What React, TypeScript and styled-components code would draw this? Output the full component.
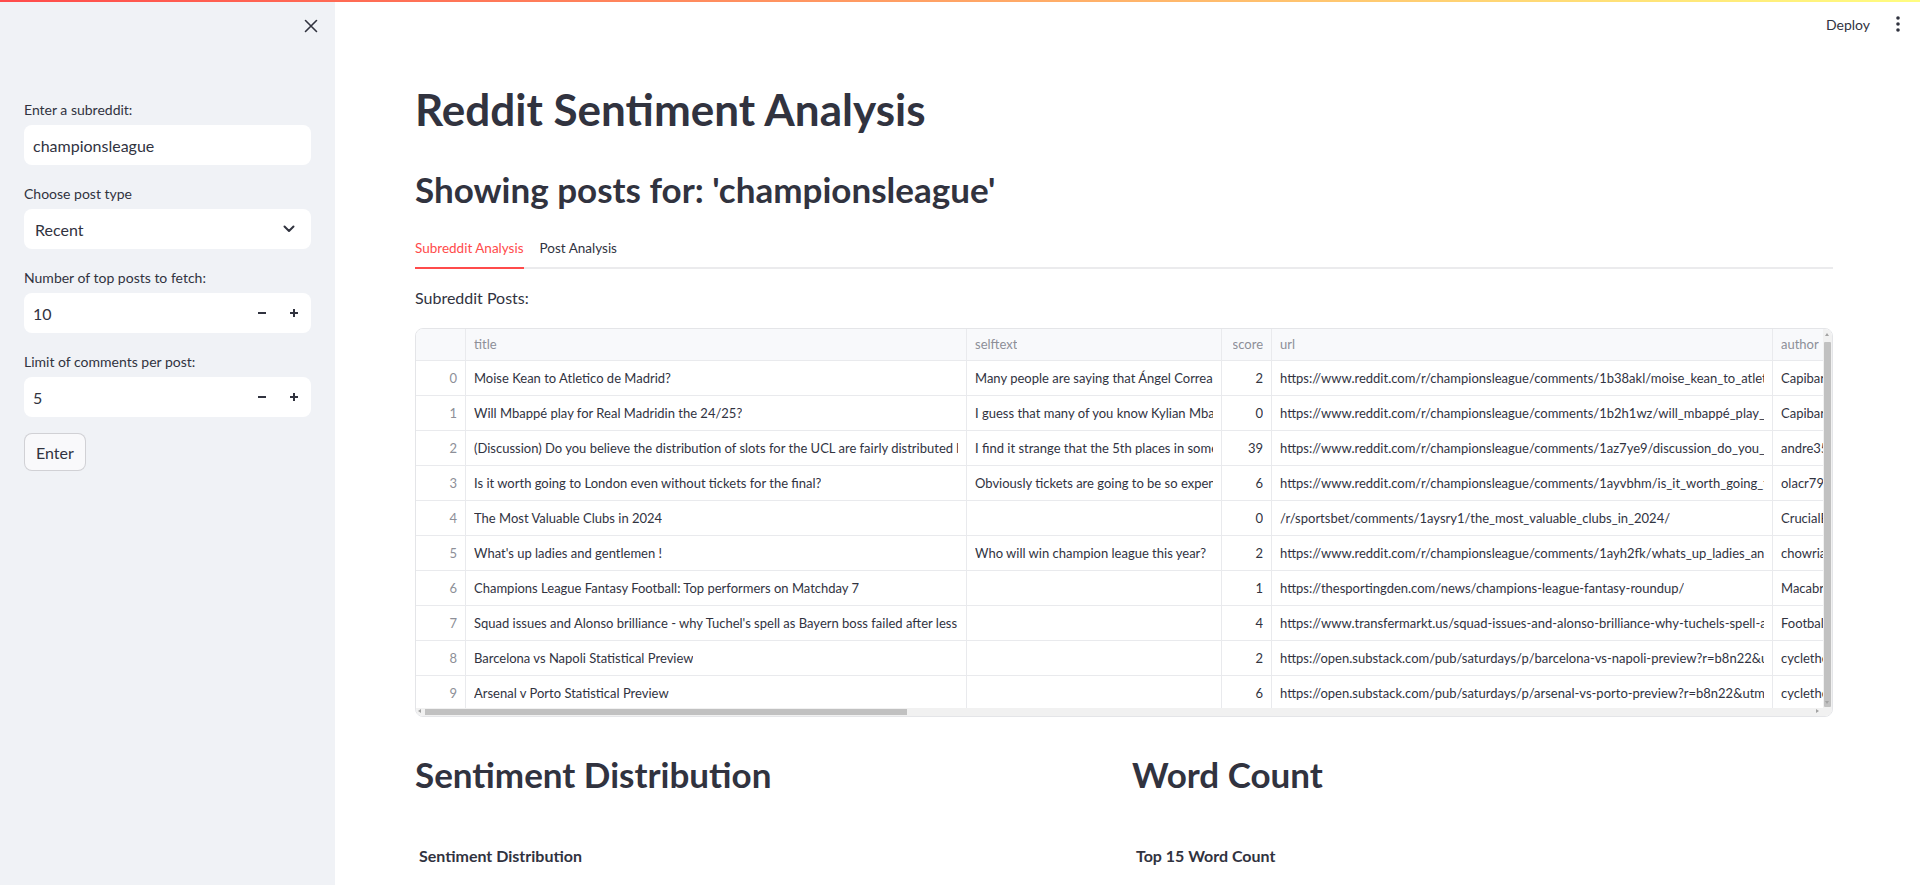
import React from "react";
import styled, { createGlobalStyle } from "styled-components";

const FONT = `"Lato", "Source Sans Pro", "Noto Sans", sans-serif`;
const TEXT = "#31333f";

const Global = createGlobalStyle`
  html, body { margin: 0; padding: 0; }
  body { font-family: ${FONT}; color: ${TEXT}; background: #ffffff; overflow: hidden; }
  * { box-sizing: border-box; }
`;

const Page = styled.div`
  display: flex;
  flex-direction: column;
  width: 100vw;
  height: 100vh;
  overflow: hidden;
`;

const Decoration = styled.div`
  height: 2px;
  flex: 0 0 2px;
  background: linear-gradient(90deg, rgb(255, 75, 75), rgb(255, 253, 128));
`;

const Body = styled.div`
  display: flex;
  flex: 1;
  min-height: 0;
`;

/* ---------- Sidebar ---------- */
const Sidebar = styled.aside`
  width: 335px;
  flex: 0 0 335px;
  background: #f0f2f6;
  display: flex;
  flex-direction: column;
`;

const SidebarHeader = styled.div`
  height: 48px;
  display: flex;
  align-items: center;
  justify-content: flex-end;
  padding: 0 12px;
`;

const IconButton = styled.button`
  width: 24px;
  height: 24px;
  border: none;
  background: transparent;
  padding: 0;
  display: flex;
  align-items: center;
  justify-content: center;
  color: ${TEXT};
  cursor: pointer;
`;

const SidebarContent = styled.div`
  padding: 47px 24px 0;
  display: flex;
  flex-direction: column;
  gap: 16px;
`;

const Widget = styled.div`
  display: flex;
  flex-direction: column;
`;

const Label = styled.label`
  font-size: 14px;
  min-height: 24px;
  display: flex;
  align-items: center;
  margin-bottom: 4px;
  color: ${TEXT};
`;

const Field = styled.div<{ $pad?: number }>`
  height: 40px;
  background: #ffffff;
  border-radius: 8px;
  display: flex;
  align-items: center;
  padding-left: ${(p) => p.$pad ?? 9}px;
  font-size: 16px;
  color: ${TEXT};
`;

const FieldValue = styled.span`
  flex: 1;
`;

const Chevron = styled.span`
  width: 40px;
  display: flex;
  align-items: center;
  justify-content: center;
  margin-right: 2px;
`;

const StepButton = styled.span`
  width: 32px;
  height: 40px;
  display: flex;
  align-items: center;
  justify-content: center;
`;

const Steppers = styled.div`
  display: flex;
  margin-right: 1px;
`;

const Button = styled.button`
  align-self: flex-start;
  height: 38px;
  padding: 0 11px;
  font-family: ${FONT};
  font-size: 16px;
  color: ${TEXT};
  background: #f9f9fb;
  border: 1px solid rgba(49, 51, 63, 0.2);
  border-radius: 8px;
`;

/* ---------- Main ---------- */
const Main = styled.main`
  flex: 1;
  min-width: 0;
  display: flex;
  flex-direction: column;
`;

const Toolbar = styled.div`
  height: 44px;
  display: flex;
  align-items: center;
  justify-content: flex-end;
  gap: 16px;
  padding-right: 10px;
`;

const Deploy = styled.span`
  font-size: 14px;
  color: ${TEXT};
`;

const Content = styled.div`
  padding: 37px 87px 0 80px;
  display: flex;
  flex-direction: column;
`;

const H1 = styled.h1`
  margin: 0;
  font-size: 44px;
  line-height: 53px;
  font-weight: 700;
  color: ${TEXT};
`;

const H2 = styled.h2<{ $top: number }>`
  margin: ${(p) => p.$top}px 0 0;
  font-size: 35px;
  line-height: 43px;
  font-weight: 700;
  color: ${TEXT};
`;

const TabList = styled.div`
  margin-top: 17px;
  display: flex;
  gap: 16px;
  border-bottom: 2px solid #ebebed;
`;

const Tab = styled.div<{ $active?: boolean }>`
  height: 41px;
  margin-bottom: -2px;
  display: flex;
  align-items: center;
  font-size: 13.5px;
  color: ${(p) => (p.$active ? "#ff4b4b" : TEXT)};
  border-bottom: 2px solid ${(p) => (p.$active ? "#ff4b4b" : "transparent")};
`;

const Paragraph = styled.p`
  margin: 16px 0 0;
  font-size: 16px;
  line-height: 25.6px;
`;

/* ---------- Data frame ---------- */
const Frame = styled.div`
  margin-top: 17px;
  height: 389px;
  border: 1px solid #e4e5e8;
  border-radius: 8px;
  position: relative;
  overflow: hidden;
`;

const Grid = styled.div`
  display: flex;
  flex-direction: column;
  width: max-content;
`;

const Row = styled.div<{ $header?: boolean }>`
  display: flex;
  height: ${(p) => (p.$header ? 32 : 35)}px;
  border-bottom: 1px solid #e9eaed;
  background: ${(p) => (p.$header ? "#f8f9fb" : "#ffffff")};
`;

const Cell = styled.div<{ $w: number; $right?: boolean; $muted?: boolean }>`
  width: ${(p) => p.$w}px;
  flex: 0 0 ${(p) => p.$w}px;
  border-right: 1px solid #e9eaed;
  padding: 0 8px;
  display: flex;
  align-items: center;
  justify-content: ${(p) => (p.$right ? "flex-end" : "flex-start")};
  font-size: 13px;
  white-space: nowrap;
  overflow: hidden;
  color: ${(p) => (p.$muted ? "#8d8f98" : TEXT)};
`;

const CellText = styled.span`
  overflow: hidden;
  white-space: nowrap;
  text-overflow: clip;
`;

const HScroll = styled.div`
  position: absolute;
  left: 0;
  right: 9px;
  bottom: 0;
  height: 8px;
  background: #f1f1f1;
`;

const HThumb = styled.div`
  position: absolute;
  left: 9px;
  top: 1px;
  width: 482px;
  height: 6px;
  background: #c1c1c1;
`;

const VScroll = styled.div`
  position: absolute;
  top: 0;
  right: 0;
  bottom: 0;
  width: 9px;
  background: #f1f1f1;
`;

const VThumb = styled.div`
  position: absolute;
  top: 13px;
  left: 1px;
  width: 7px;
  height: 365px;
  background: #c1c1c1;
  border-radius: 1px;
`;

const Arrow = styled.span<{ $dir: "up" | "down" | "left" | "right" }>`
  position: absolute;
  width: 0;
  height: 0;
  ${(p) =>
    p.$dir === "up"
      ? "top: 4px; left: 2px; border-left: 2.5px solid transparent; border-right: 2.5px solid transparent; border-bottom: 3px solid #a3a3a3;"
      : p.$dir === "down"
      ? "bottom: 12px; left: 2px; border-left: 2.5px solid transparent; border-right: 2.5px solid transparent; border-top: 3px solid #a3a3a3;"
      : p.$dir === "left"
      ? "left: 2px; top: 1.5px; border-top: 2.5px solid transparent; border-bottom: 2.5px solid transparent; border-right: 3px solid #a3a3a3;"
      : "right: 4px; top: 1.5px; border-top: 2.5px solid transparent; border-bottom: 2.5px solid transparent; border-left: 3px solid #a3a3a3;"}
`;

/* ---------- Charts ---------- */
const Columns = styled.div`
  display: grid;
  grid-template-columns: 1fr 1fr;
  gap: 16px;
  margin-top: 36px;
`;

const Column = styled.div`
  display: flex;
  flex-direction: column;
`;

const ChartTitle = styled.div`
  margin: 50px 0 0 4px;
  font-size: 16px;
  line-height: 20px;
  font-weight: 700;
  color: ${TEXT};
`;

/* ---------- Data ---------- */
const COLS = [
  { key: "title", w: 501 },
  { key: "selftext", w: 255 },
  { key: "score", w: 50, right: true },
  { key: "url", w: 501 },
  { key: "author", w: 160 },
] as const;

type Post = { title: string; selftext: string; score: number; url: string; author: string };

const POSTS: Post[] = [
  {
    title: "Moise Kean to Atletico de Madrid?",
    selftext: "Many people are saying that Ángel Correa,probably will leave the club",
    score: 2,
    url: "https://www.reddit.com/r/championsleague/comments/1b38akl/moise_kean_to_atletico_de_madrid/",
    author: "Capibara_92",
  },
  {
    title: "Will Mbappé play for Real Madridin the 24/25?",
    selftext: "I guess that many of you know Kylian Mbappé is leaving PSG",
    score: 0,
    url: "https://www.reddit.com/r/championsleague/comments/1b2h1wz/will_mbappé_play_for_real_madridin_the_2425/",
    author: "Capibara_92",
  },
  {
    title: "(Discussion) Do you believe the distribution of slots for the UCL are fairly distributed between leagues?",
    selftext: "I find it strange that the 5th places in some leagues get a spot",
    score: 39,
    url: "https://www.reddit.com/r/championsleague/comments/1az7ye9/discussion_do_you_believe_the_distribution/",
    author: "andre3500",
  },
  {
    title: "Is it worth going to London even without tickets for the final?",
    selftext: "Obviously tickets are going to be so expensive for the final",
    score: 6,
    url: "https://www.reddit.com/r/championsleague/comments/1ayvbhm/is_it_worth_going_to_london_even_without/",
    author: "olacr79",
  },
  {
    title: "The Most Valuable Clubs in 2024",
    selftext: "",
    score: 0,
    url: "/r/sportsbet/comments/1aysry1/the_most_valuable_clubs_in_2024/",
    author: "CrucialBets",
  },
  {
    title: "What's up ladies and gentlemen !",
    selftext: "Who will win champion league this year?",
    score: 2,
    url: "https://www.reddit.com/r/championsleague/comments/1ayh2fk/whats_up_ladies_and_gentlemen/",
    author: "chowriaz",
  },
  {
    title: "Champions League Fantasy Football: Top performers on Matchday 7",
    selftext: "",
    score: 1,
    url: "https://thesportingden.com/news/champions-league-fantasy-roundup/",
    author: "Macabre_Sports",
  },
  {
    title: "Squad issues and Alonso brilliance - why Tuchel's spell as Bayern boss failed after less than a year",
    selftext: "",
    score: 4,
    url: "https://www.transfermarkt.us/squad-issues-and-alonso-brilliance-why-tuchels-spell-as-bayern-boss-failed/view/news/435000",
    author: "FootballNews",
  },
  {
    title: "Barcelona vs Napoli Statistical Preview",
    selftext: "",
    score: 2,
    url: "https://open.substack.com/pub/saturdays/p/barcelona-vs-napoli-preview?r=b8n22&utm_campaign=post",
    author: "cyclethesports",
  },
  {
    title: "Arsenal v Porto Statistical Preview",
    selftext: "",
    score: 6,
    url: "https://open.substack.com/pub/saturdays/p/arsenal-vs-porto-preview?r=b8n22&utm_campaign=post",
    author: "cyclethesports",
  },
];

/* ---------- Icons ---------- */
const CloseIcon = () => (
  <svg width="14" height="14" viewBox="0 0 14 14">
    <path d="M1.5 1.5 L12.5 12.5 M12.5 1.5 L1.5 12.5" stroke={TEXT} strokeWidth="1.6" strokeLinecap="round" />
  </svg>
);

const ChevronDown = () => (
  <svg width="12" height="8" viewBox="0 0 12 8">
    <path d="M1.5 1.5 L6 6 L10.5 1.5" stroke={TEXT} strokeWidth="2" fill="none" strokeLinecap="round" strokeLinejoin="round" />
  </svg>
);

const Minus = () => (
  <svg width="10" height="10" viewBox="0 0 10 10">
    <path d="M1 5 H9" stroke={TEXT} strokeWidth="2" />
  </svg>
);

const Plus = () => (
  <svg width="10" height="10" viewBox="0 0 10 10">
    <path d="M1 5 H9 M5 1 V9" stroke={TEXT} strokeWidth="2" />
  </svg>
);

const Kebab = () => (
  <svg width="6" height="18" viewBox="0 0 6 18">
    <circle cx="3" cy="3" r="1.8" fill={TEXT} />
    <circle cx="3" cy="9" r="1.8" fill={TEXT} />
    <circle cx="3" cy="15" r="1.8" fill={TEXT} />
  </svg>
);

const NumberField = ({ value }: { value: string }) => (
  <Field>
    <FieldValue>{value}</FieldValue>
    <Steppers>
      <StepButton>
        <Minus />
      </StepButton>
      <StepButton>
        <Plus />
      </StepButton>
    </Steppers>
  </Field>
);

export default function App() {
  return (
    <Page>
      <Global />
      <Decoration />
      <Body>
        <Sidebar>
          <SidebarHeader>
            <IconButton aria-label="close">
              <CloseIcon />
            </IconButton>
          </SidebarHeader>
          <SidebarContent>
            <Widget>
              <Label>Enter a subreddit:</Label>
              <Field>
                <FieldValue>championsleague</FieldValue>
              </Field>
            </Widget>
            <Widget>
              <Label>Choose post type</Label>
              <Field $pad={11}>
                <FieldValue>Recent</FieldValue>
                <Chevron>
                  <ChevronDown />
                </Chevron>
              </Field>
            </Widget>
            <Widget>
              <Label>Number of top posts to fetch:</Label>
              <NumberField value="10" />
            </Widget>
            <Widget>
              <Label>Limit of comments per post:</Label>
              <NumberField value="5" />
            </Widget>
            <Button>Enter</Button>
          </SidebarContent>
        </Sidebar>
        <Main>
          <Toolbar>
            <Deploy>Deploy</Deploy>
            <IconButton aria-label="menu">
              <Kebab />
            </IconButton>
          </Toolbar>
          <Content>
            <H1>Reddit Sentiment Analysis</H1>
            <H2 $top={32}>Showing posts for: 'championsleague'</H2>
            <TabList>
              <Tab $active>Subreddit Analysis</Tab>
              <Tab>Post Analysis</Tab>
            </TabList>
            <Paragraph>Subreddit Posts:</Paragraph>
            <Frame>
              <Grid>
                <Row $header>
                  <Cell $w={50} />
                  {COLS.map((c) => (
                    <Cell key={c.key} $w={c.w} $muted $right={"right" in c && c.right}>
                      <CellText>{c.key}</CellText>
                    </Cell>
                  ))}
                </Row>
                {POSTS.map((p, i) => (
                  <Row key={i}>
                    <Cell $w={50} $right $muted>
                      {i}
                    </Cell>
                    {COLS.map((c) => (
                      <Cell key={c.key} $w={c.w} $right={"right" in c && c.right}>
                        <CellText>{String(p[c.key])}</CellText>
                      </Cell>
                    ))}
                  </Row>
                ))}
              </Grid>
              <HScroll>
                <Arrow $dir="left" />
                <HThumb />
                <Arrow $dir="right" />
              </HScroll>
              <VScroll>
                <Arrow $dir="up" />
                <VThumb />
                <Arrow $dir="down" />
              </VScroll>
            </Frame>
            <Columns>
              <Column>
                <H2 $top={0}>Sentiment Distribution</H2>
                <ChartTitle>Sentiment Distribution</ChartTitle>
              </Column>
              <Column>
                <H2 $top={0}>Word Count</H2>
                <ChartTitle>Top 15 Word Count</ChartTitle>
              </Column>
            </Columns>
          </Content>
        </Main>
      </Body>
    </Page>
  );
}
